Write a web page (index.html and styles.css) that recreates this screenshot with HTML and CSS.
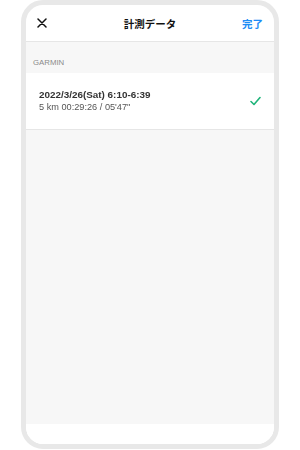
FILE: index.html
```html
<!DOCTYPE html>
<html lang="ja">
<head>
<meta charset="utf-8">
<link rel="stylesheet" href="styles.css">
</head>
<body>
<div class="phone">
  <div class="header">
    <svg class="close" width="10" height="10" viewBox="0 0 10 10"><path d="M1 1L9 9M9 1L1 9" stroke="#111" stroke-width="1.5" stroke-linecap="round"/></svg>
    <div class="title">計測データ</div>
    <div class="done">完了</div>
  </div>
  <div class="section">GARMIN</div>
  <div class="row">
    <div class="texts">
      <div class="line1">2022/3/26(Sat) 6:10-6:39</div>
      <div class="line2">5 km 00:29:26 / 05'47"</div>
    </div>
    <svg class="check" width="11" height="10" viewBox="0 0 11 10"><path d="M1 5.5L4 8.5L10 1.5" fill="none" stroke="#1fb47a" stroke-width="1.6" stroke-linecap="round" stroke-linejoin="round"/></svg>
  </div>
  <div class="rest"></div>
  <div class="footer"></div>
</div>
</body>
</html>
```

FILE: styles.css
```css
html, body { margin: 0; padding: 0; background: #fff; }
body { font-family: "Noto Sans CJK JP", "Noto Sans", sans-serif; }
.phone {
  box-sizing: border-box;
  margin-left: 21px;
  width: 258px;
  height: 449px;
  border: 5px solid #e8e8e8;
  border-radius: 22px;
  overflow: hidden;
  display: flex;
  flex-direction: column;
  background: #fff;
}
.header {
  height: 36px;
  border-bottom: 1px solid #e6e6e6;
  display: flex;
  align-items: center;
  justify-content: space-between;
  padding: 0 11px 0 11px;
  position: relative;
}
.close { display: block; }
.title {
  position: absolute;
  left: 0; right: 0;
  text-align: center;
  font-size: 10.5px;
  font-weight: 700;
  color: #111;
  pointer-events: none;
}
.done { font-size: 10.5px; font-weight: 700; color: #1e8cf5; }
.section {
  height: 31px;
  background: #f7f7f7;
  box-sizing: border-box;
  padding: 16px 0 0 7px;
  font-family: "Liberation Sans", Arial, sans-serif;
  font-size: 7.8px;
  color: #8a8a8a;
}
.row {
  height: 57px;
  box-sizing: border-box;
  border-bottom: 1px solid #e6e6e6;
  display: flex;
  align-items: center;
  justify-content: space-between;
  padding: 0 13px 0 13px;
  background: #fff;
}
.texts { font-family: "Liberation Sans", Arial, sans-serif; filter: blur(0.35px); }
.line1 { font-size: 9.9px; font-weight: 700; color: #333; line-height: 12px; }
.line2 { font-size: 9.2px; color: #555; line-height: 12px; }
.check { display: block; }
.rest { flex: 1; background: #f7f7f7; }
.footer { height: 20px; background: #fff; }
```
